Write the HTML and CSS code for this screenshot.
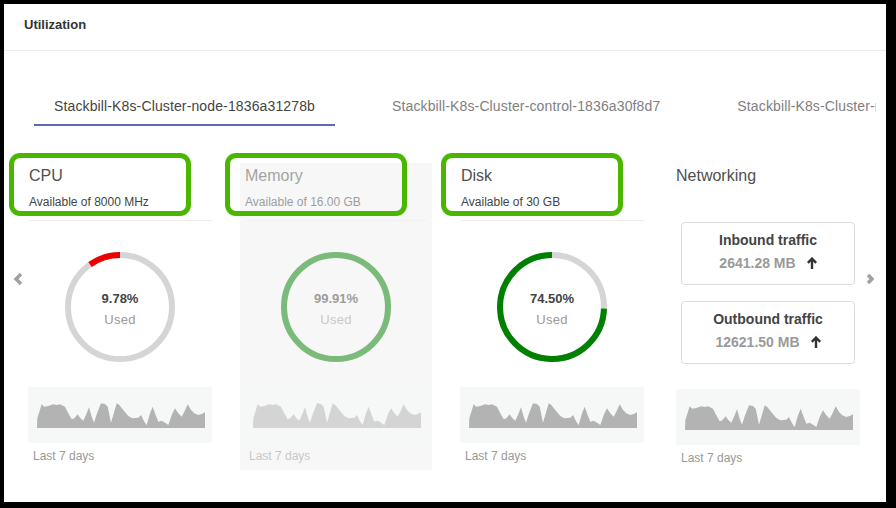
FILE: index.html
```html
<!DOCTYPE html>
<html lang="en">
<head>
<meta charset="utf-8">
<title>Utilization</title>
<link rel="stylesheet" href="styles.css">
</head>
<body>
<svg class="defs" width="0" height="0" aria-hidden="true">
  <defs>
    <symbol id="spark" viewBox="0 0 168 25">
      <polygon points="0,25 0.3,15.3 4.7,1.3 7.3,3.7 11.3,3 16.3,1.3 19.7,2 23,1.3 28,3.7 31.3,10.3 34.7,16.3 37.3,15.3 40.7,11.3 43,14.7 46.3,17.7 49.7,10.3 52,4.3 54.7,13.7 57,19.7 59.7,11.3 62,5.3 64,0.3 68,1 70.7,3.7 74,19.7 76.3,12 79.7,0.3 82.3,2 86.3,7 91.3,13 95.3,15.3 101.3,14.7 104,12 107.3,18.7 109.7,22 113,10.3 115.7,3.7 118,10.3 121.3,18.7 124.7,17.7 128,19.7 131.3,22 134.7,12 138,5.3 141.3,10.3 144.7,13.7 147.3,8.7 150.7,1.3 154,7 157.3,10.3 161.3,12 164.7,11 168,9.3 168,25"/>
    </symbol>
  </defs>
</svg>
<div class="panel">
  <div class="panel-header">Utilization</div>
  <div class="tabs">
    <div class="tab active">Stackbill-K8s-Cluster-node-1836a31278b</div>
    <div class="tab">Stackbill-K8s-Cluster-control-1836a30f8d7</div>
    <div class="tab">Stackbill-K8s-Cluster-node-1836a32f9c1</div>
  </div>
  <div class="carousel">
    <button class="nav prev" aria-label="Previous">
      <svg width="10" height="14" viewBox="0 0 10 14"><polyline points="8,2 3,7 8,12"/></svg>
    </button>
    <div class="cols">
      <div class="col">
        <div class="col-head">
          <div class="col-title">CPU</div>
          <div class="col-sub">Available of 8000 MHz</div>
        </div>
        <span class="hl"></span>
        <div class="gauge">
          <svg width="110" height="110" viewBox="0 0 110 110">
            <circle class="track" cx="55" cy="55" r="52"/>
            <path class="arc red" d="M55 3 A52 52 0 0 0 25.03 12.51"/>
          </svg>
          <div class="gauge-label"><b>9.78%</b><span>Used</span></div>
        </div>
        <div class="spark"><svg width="168" height="25"><use href="#spark"/></svg></div>
        <div class="spark-cap">Last 7 days</div>
      </div>
      <div class="col dim">
        <div class="col-head">
          <div class="col-title">Memory</div>
          <div class="col-sub">Available of 16.00 GB</div>
        </div>
        <span class="hl"></span>
        <div class="gauge">
          <svg width="110" height="110" viewBox="0 0 110 110">
            <circle class="track" cx="55" cy="55" r="52"/>
            <circle class="arc green" cx="55" cy="55" r="52"/>
          </svg>
          <div class="gauge-label"><b>99.91%</b><span>Used</span></div>
        </div>
        <div class="spark"><svg width="168" height="25"><use href="#spark"/></svg></div>
        <div class="spark-cap">Last 7 days</div>
      </div>
      <div class="col">
        <div class="col-head">
          <div class="col-title">Disk</div>
          <div class="col-sub">Available of 30 GB</div>
        </div>
        <span class="hl"></span>
        <div class="gauge">
          <svg width="110" height="110" viewBox="0 0 110 110">
            <circle class="track" cx="55" cy="55" r="52"/>
            <path class="arc green" d="M55 3 A52 52 0 1 0 106.97 56.63"/>
          </svg>
          <div class="gauge-label"><b>74.50%</b><span>Used</span></div>
        </div>
        <div class="spark"><svg width="168" height="25"><use href="#spark"/></svg></div>
        <div class="spark-cap">Last 7 days</div>
      </div>
      <div class="col net">
        <div class="col-head plain">
          <div class="col-title">Networking</div>
        </div>
        <div class="traffic">
          <div class="traffic-title">Inbound traffic</div>
          <div class="traffic-value">2641.28 MB
            <svg width="10" height="12" viewBox="0 0 10 12"><path d="M5 12V1.5M0.8 5.8L5 1.6L9.2 5.8"/></svg>
          </div>
        </div>
        <div class="traffic">
          <div class="traffic-title">Outbound traffic</div>
          <div class="traffic-value">12621.50 MB
            <svg width="10" height="12" viewBox="0 0 10 12"><path d="M5 12V1.5M0.8 5.8L5 1.6L9.2 5.8"/></svg>
          </div>
        </div>
        <div class="spark"><svg width="168" height="25"><use href="#spark"/></svg></div>
        <div class="spark-cap">Last 7 days</div>
      </div>
    </div>
    <button class="nav next" aria-label="Next">
      <svg width="8" height="12" viewBox="0 0 8 12"><polyline points="2,2 6,6 2,10"/></svg>
    </button>
  </div>
</div>
</body>
</html>
```
FILE: styles.css
```css
* { box-sizing: border-box; }

html, body {
  margin: 0;
  background: #000;
}

body {
  padding: 4px 10px 6px 4px;
  font-family: "Liberation Sans", Arial, sans-serif;
  color: #444;
}

.defs { position: absolute; width: 0; height: 0; }

.panel {
  background: #fff;
  height: 498px;
  overflow: hidden;
}

.panel-header {
  height: 47px;
  padding: 13px 0 0 20px;
  font-size: 13px;
  line-height: 16px;
  font-weight: bold;
  color: #333;
  border-bottom: 1px solid #ececec;
}

.tabs {
  display: flex;
  margin: 35px 10px 0 0;
  padding-left: 30px;
  overflow: hidden;
}

.tab {
  flex: none;
  padding: 12px 20px 10px;
  margin-right: 37px;
  font-size: 14px;
  line-height: 16px;
  letter-spacing: 0.13px;
  white-space: nowrap;
  color: #808080;
  border-bottom: 2px solid transparent;
}

.tab.active {
  color: #444;
  border-bottom-color: #5a6bb4;
}

.carousel {
  display: flex;
  align-items: flex-start;
  margin-top: 37px;
}

.nav {
  flex: none;
  border: 0;
  background: none;
  padding: 0;
  margin-top: 109px;
  cursor: pointer;
  display: flex;
}

.nav svg polyline {
  fill: none;
  stroke: #a0a0a0;
  stroke-width: 3.4;
  stroke-linecap: butt;
  stroke-linejoin: miter;
}

.nav.prev {
  width: 20px;
  padding-left: 9px;
}

.nav.next {
  margin-left: 2px;
  margin-top: 110px;
}

.cols {
  display: flex;
  gap: 24px;
}

.col {
  position: relative;
  width: 192px;
  padding: 0 4px 4px;
}

.col-head {
  padding: 3px 0 10px 1px;
  border-bottom: 1px solid #efefef;
}

.col-head.plain {
  border-bottom: 0;
  padding-bottom: 0;
}

.col-title {
  font-size: 16px;
  line-height: 20px;
  color: #505050;
}

.col-sub {
  margin-top: 8px;
  font-size: 12px;
  line-height: 16px;
  color: #444;
}

.hl {
  position: absolute;
  left: -15px;
  top: -10px;
  width: 182px;
  height: 63px;
  border: 5px solid #4bb600;
  border-radius: 11px;
}

.gauge {
  display: grid;
  justify-items: center;
  align-items: center;
  margin-top: 31px;
}

.gauge > * { grid-area: 1 / 1; }

.gauge svg circle,
.gauge svg path {
  fill: none;
  stroke-width: 6;
}

.gauge .track { stroke: #d5d5d5; }
.gauge .red { stroke: #ee0000; }
.gauge .green { stroke: #008000; }

.gauge-label {
  display: flex;
  flex-direction: column;
  align-items: center;
  padding-top: 4px;
}

.gauge-label b {
  font-size: 13px;
  line-height: 16px;
  color: #444;
}

.gauge-label span {
  margin-top: 5px;
  font-size: 13px;
  line-height: 16px;
  color: #9a9a9a;
  letter-spacing: 0.3px;
}

.spark {
  margin-top: 25px;
  height: 56px;
  padding: 16px 7px 15px 9px;
  background: #f6f7f7;
}

.spark svg {
  display: block;
  fill: #b3b3b3;
}

.spark-cap {
  margin-top: 5px;
  padding-left: 5px;
  font-size: 12px;
  line-height: 16px;
  color: #999;
}

.col.dim {
  background: #f7f7f7;
}

.col.dim .col-head,
.col.dim .gauge,
.col.dim .spark,
.col.dim .spark-cap {
  opacity: 0.5;
}

.col.net .col-head { padding-left: 0; }

.traffic {
  margin: 36px 5px 0;
  height: 63px;
  border: 1px solid #dcdcdc;
  border-radius: 4px;
  padding-top: 9px;
  display: flex;
  flex-direction: column;
  align-items: center;
}

.traffic + .traffic { margin-top: 16px; }

.traffic-title {
  font-size: 14px;
  line-height: 17px;
  font-weight: bold;
  color: #444;
}

.traffic-value {
  margin-top: 6px;
  display: flex;
  align-items: center;
  gap: 11px;
  font-size: 14px;
  line-height: 16px;
  font-weight: bold;
  color: #9a9a9a;
}

.traffic-value svg path {
  fill: none;
  stroke: #333;
  stroke-width: 2.4;
}

.col.net .spark { margin-top: 25px; }
```
